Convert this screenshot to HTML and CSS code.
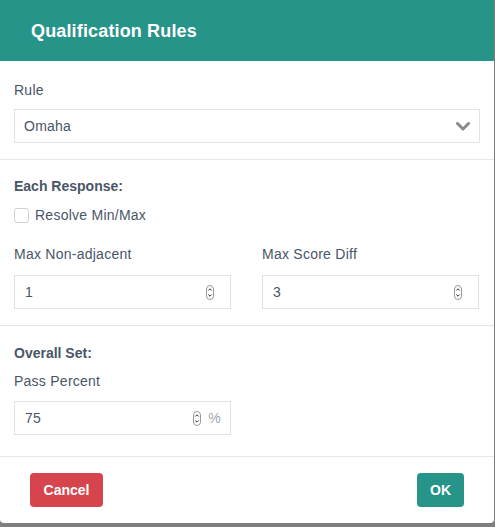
FILE: index.html
```html
<!DOCTYPE html>
<html>
<head>
<meta charset="utf-8">
<link rel="stylesheet" href="styles.css">
</head>
<body>
<div class="modal">
  <div class="modal-header">
    <h1 class="modal-title">Qualification Rules</h1>
  </div>
  <div class="section section-rule">
    <div class="label">Rule</div>
    <div class="select">
      <span class="select-value">Omaha</span>
      <svg class="chevron" width="14" height="9" viewBox="0 0 14 9"><path d="M1.5 1.5 L7 7 L12.5 1.5" fill="none" stroke="#8a8a8a" stroke-width="3" stroke-linecap="round" stroke-linejoin="round"/></svg>
    </div>
  </div>
  <div class="section">
    <div class="heading">Each Response:</div>
    <label class="check-row"><span class="checkbox"></span><span>Resolve Min/Max</span></label>
    <div class="fields">
      <div class="field">
        <div class="label">Max Non-adjacent</div>
        <div class="input"><span class="input-value">1</span>
          <svg class="spin" width="8" height="15" viewBox="0 0 8 15"><rect x="0.5" y="0.5" width="7" height="14" rx="3.5" fill="#fff" stroke="#9a9a9a"/><path d="M2.3 5.5 L4 3.8 L5.7 5.5 M2.3 9.5 L4 11.2 L5.7 9.5" fill="none" stroke="#333" stroke-width="1"/></svg>
        </div>
      </div>
      <div class="field">
        <div class="label">Max Score Diff</div>
        <div class="input"><span class="input-value">3</span>
          <svg class="spin" width="8" height="15" viewBox="0 0 8 15"><rect x="0.5" y="0.5" width="7" height="14" rx="3.5" fill="#fff" stroke="#9a9a9a"/><path d="M2.3 5.5 L4 3.8 L5.7 5.5 M2.3 9.5 L4 11.2 L5.7 9.5" fill="none" stroke="#333" stroke-width="1"/></svg>
        </div>
      </div>
    </div>
  </div>
  <div class="section section-last">
    <div class="heading">Overall Set:</div>
    <div class="label label-tight">Pass Percent</div>
    <div class="input input-half"><span class="input-value">75</span>
      <svg class="spin" width="8" height="15" viewBox="0 0 8 15"><rect x="0.5" y="0.5" width="7" height="14" rx="3.5" fill="#fff" stroke="#9a9a9a"/><path d="M2.3 5.5 L4 3.8 L5.7 5.5 M2.3 9.5 L4 11.2 L5.7 9.5" fill="none" stroke="#333" stroke-width="1"/></svg>
      <span class="unit">%</span>
    </div>
  </div>
  <div class="modal-footer">
    <button class="btn btn-cancel">Cancel</button>
    <button class="btn btn-ok">OK</button>
  </div>
</div>
</body>
</html>
```
FILE: styles.css
```css
* { box-sizing: border-box; }
html, body { margin: 0; padding: 0; }
body {
  background: #7f7f7f;
  font-family: "Liberation Sans", Arial, sans-serif;
  color: #4a5568;
  font-size: 14px;
  letter-spacing: 0.25px;
  width: 495px;
  height: 527px;
  overflow: hidden;
}
.modal {
  width: 494px;
  height: 523px;
  background: #fff;
  border-radius: 0 0 4px 4px;
  display: flex;
  flex-direction: column;
}
.modal-header {
  background: #27948a;
  height: 61px;
  display: flex;
  align-items: center;
  padding: 0 31px;
}
.modal-title {
  margin: 0;
  color: #fff;
  font-size: 18px;
  font-weight: bold;
  line-height: 22px;
  letter-spacing: 0.15px;
}
.section {
  padding: 16px 14px;
  border-bottom: 1px solid #e6e6e6;
}
.section-rule { padding-top: 19px; }
.section-last { padding-top: 17px; padding-bottom: 21px; }
.label {
  line-height: 21px;
  margin-bottom: 8px;
}
.label-tight { margin-top: 7px; margin-bottom: 9px; }
.heading {
  font-weight: bold;
  line-height: 21px;
  letter-spacing: 0;
}
.select {
  height: 34px;
  border: 1px solid #e2e2e2;
  display: flex;
  align-items: center;
  justify-content: space-between;
  padding: 0 9px 0 9px;
  width: 466px;
}
.chevron { margin-top: 1px; }
.check-row {
  display: flex;
  align-items: center;
  gap: 6px;
  height: 20px;
  margin-top: 8px;
}
.checkbox {
  width: 15px;
  height: 15px;
  border: 1px solid #d2d2d2;
  border-radius: 3px;
  background: #fff;
}
.fields {
  display: grid;
  grid-template-columns: 217px 217px;
  column-gap: 31px;
  margin-top: 19px;
}
.fields .label { margin-bottom: 10px; }
.input {
  height: 34px;
  border: 1px solid #e2e2e2;
  display: flex;
  align-items: center;
  padding: 0 16px 0 10px;
}
.input-value { flex: 1; }
.spin { margin-top: 1px; }
.input-half { width: 217px; padding-right: 9px; }
.unit {
  color: #a0a7b0;
  margin-left: 7px;
  font-size: 14px;
}
.modal-footer {
  display: flex;
  justify-content: space-between;
  padding: 16px 30px;
}
.btn {
  height: 34px;
  border: none;
  border-radius: 4px;
  color: #fff;
  font-family: "Liberation Sans", Arial, sans-serif;
  font-weight: bold;
  font-size: 14px;
  padding: 0 13px;
}
.btn-cancel { background: #d6454d; width: 73px; }
.btn-ok { background: #27948a; width: 47px; }
```
